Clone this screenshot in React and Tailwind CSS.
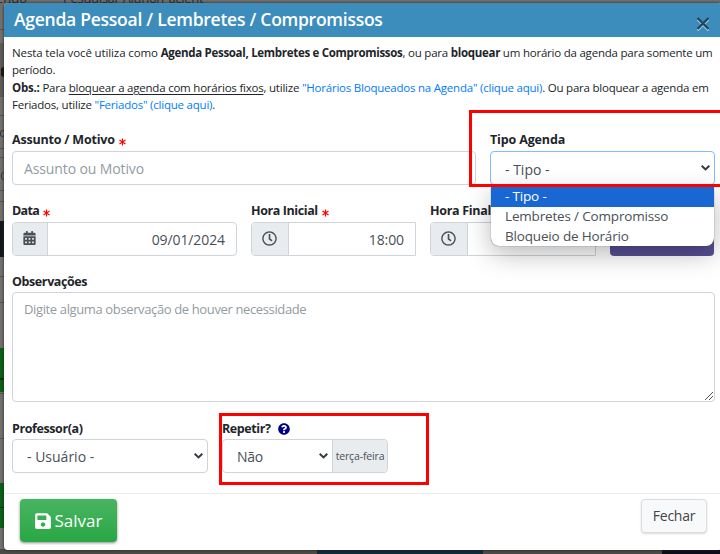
import React, { useState } from 'react';
import { FaCalendarAlt, FaRegClock, FaSave, FaQuestionCircle } from 'react-icons/fa';

const Label = ({ children, required, spacing = 'tracking-[-0.4px]' }) => (
  <label className="flex items-center h-[21px] pt-[2px] text-[12.5px] font-bold text-[#212529] whitespace-nowrap">
    <span className={spacing}>{children}</span>
    {required && <Asterisk />}
  </label>
);

const Asterisk = () => (
  <svg className="w-[7px] h-[8px] ml-1 mt-[2px]" viewBox="0 0 7 8" stroke="#ff0000" strokeWidth="1.2">
    <path d="M3.5 0.5v7M0.5 2l6 4M6.5 2l-6 4" />
  </svg>
);

const Chevron = () => (
  <svg className="w-[9px] h-[6px] shrink-0" viewBox="0 0 9 6" fill="none" stroke="#343a40" strokeWidth="2">
    <path d="M0.7 0.8L4.5 4.4L8.3 0.8" />
  </svg>
);

const TimeInput = ({ value }) => (
  <div className="flex h-[34px] border border-[#ced4da] rounded-l">
    <div className="w-[37px] pr-[2px] shrink-0 flex items-center justify-center bg-[#e9ecef] border-r border-[#ced4da] rounded-l-[3px]">
      <FaRegClock className="w-[15px] h-[15px] text-[#495057] -mt-[2px]" />
    </div>
    <div className="flex-1 flex items-center justify-end pr-[11px] pt-[2px] text-sm text-[#495057] tracking-[-0.1px]">{value}</div>
  </div>
);

const options = ['- Tipo -', 'Lembretes / Compromisso', 'Bloqueio de Horário'];

// Page behind the modal, dimmed by the backdrop
const Backdrop = () => (
  <div className="absolute inset-0 overflow-hidden bg-[#72706d] text-[13px] text-[#2b2b2b]">
    <div className="flex -mt-[11px] leading-[18px] whitespace-nowrap">
      <span className="w-[63px] -ml-1">endo</span>
      <span className="tracking-[-0.3px] ml-1">Pesquisar Aluno/Pacient</span>
    </div>
    <div className="absolute left-0 top-[29px] w-1 h-px bg-[#575552]" />
    <div className="absolute left-0 top-[43px] w-1 h-[54px] bg-[#5d5b58]" />
    <div className="absolute left-[1px] top-[67px] w-[3px] h-[10px] rounded-l-full bg-[#1c1310]" />
    <div className="absolute left-0 top-[115px] w-1 h-px bg-[#575552]" />
    <div className="absolute left-0 top-[130px] w-[5px] h-[7px] rounded-full border border-[#333]" />
    <div className="absolute left-0 top-[148px] w-1 h-[10px] border-y border-[#575552]" />
    <div className="absolute left-[1px] top-[172px] w-[5px] h-[8px] rounded-full border border-[#333]" />
    <div className="absolute left-0 top-[190px] w-1 h-[12px] border-y border-[#575552]" />
    <div className="absolute left-0 top-[221px] w-1 h-9 bg-[#11181d]" />
    <div className="absolute left-0 top-[276px] w-1 h-[27px] border-y border-[#575552]" />
    <div className="absolute left-0 top-[348px] w-1 h-11 bg-[#086214]" />
    <div className="absolute left-0 top-[378px] w-1 h-[2px] bg-[#0a2a0e]" />
    <div className="absolute left-0 top-[393px] w-1 h-[46px] border-y border-[#575552]" />
    <div className="absolute left-0 top-[483px] w-1 h-[45px] bg-[#086214]" />
    <div className="absolute left-0 top-[507px] w-1 h-px bg-[#0a2a0e]" />
    <div className="absolute left-0 bottom-0 w-full h-[5px] flex bg-[#4b4b44]">
      <div className="ml-[317px] w-[166px] bg-[#102c3c]" />
      <div className="w-[179px] bg-[#4c4948]" />
      <div className="flex-1 bg-[#0b0e19]" />
    </div>
  </div>
);

const App = () => {
  const [selected, setSelected] = useState(0);

  return (
    <div className="relative w-[720px] h-[554px] overflow-hidden font-['Open_Sans','Noto_Sans',sans-serif]">
      <Backdrop />

      <div className="relative ml-1 mt-[3px] w-[718px] h-[547px] bg-white rounded overflow-hidden shadow-[0_0_3px_#222]">
        <header className="h-[34px] bg-[#3c8dbc] flex items-center justify-between pl-[10px] pr-[12px]">
          <h1 className="text-[17.5px] leading-none font-semibold text-white tracking-[-0.26px] whitespace-nowrap">
            Agenda Pessoal / Lembretes / Compromissos
          </h1>
          <svg className="w-[14px] h-[14px] mt-[8px]" viewBox="0 0 14 14" fill="none">
            <path d="M1.5 2.5l11 11M12.5 2.5l-11 11" stroke="#a9cde2" strokeWidth="2" />
            <path d="M1.5 1l11 11M12.5 1l-11 11" stroke="#1e465e" strokeWidth="2.3" />
          </svg>
        </header>

        <section className="pl-2 pt-[7px] h-[92px] text-[11.5px] leading-[17.4px] text-[#212529] tracking-[-0.22px] whitespace-nowrap">
          <p>
            <span className="tracking-[-0.12px]">Nesta tela você utiliza como </span>
            <b className="tracking-[-0.3px]">Agenda Pessoal, Lembretes e Compromissos</b>, ou para{' '}
            <b className="tracking-[-0.3px]">bloquear</b> um horário da agenda para somente um
          </p>
          <p>período.</p>
          <p>
            <b>Obs.:</b> Para <u className="underline-offset-2">bloquear a agenda com horários fixos</u>, utilize{' '}
            <span className="text-[#007bff]">"Horários Bloqueados na Agenda" (clique aqui)</span>. Ou para bloquear a agenda em
          </p>
          <p>
            Feriados, utilize <span className="text-[#007bff]">"Feriados" (clique aqui)</span>.
          </p>
        </section>

        <div className="flex pl-2 gap-[14px] h-[71px]">
          <div className="w-[464px]">
            <Label required spacing="tracking-[-0.2px]">Assunto / Motivo</Label>
            <div className="mt-[1px] h-[34px] border border-[#ced4da] rounded flex items-center px-[11px] pt-[2px] text-sm text-[#939ba2] tracking-[-0.12px]">
              Assunto ou Motivo
            </div>
          </div>
          <div className="w-[225px]">
            <Label spacing="tracking-[-0.15px]">Tipo Agenda</Label>
            <div className="mt-[1px] h-[34px] border border-[#80bdff] rounded flex items-center justify-between pl-[14px] pr-[4px] text-sm text-[#495057]">
              <span className="pt-[3px]">{options[selected]}</span>
              <Chevron />
            </div>
          </div>
        </div>

        <div className="flex pl-2 h-[71px]">
          <div className="w-[225px] mr-[14px]">
            <Label required spacing="tracking-[-0.7px]">Data</Label>
            <div className="mt-[1px] h-[34px] flex border border-[#ced4da] rounded">
              <div className="w-[35px] pr-[2px] flex items-center justify-center bg-[#e9ecef] border-r border-[#ced4da] rounded-l-[3px]">
                <FaCalendarAlt className="w-[13px] h-[14px] text-[#495057] -mt-[2px]" />
              </div>
              <div className="flex-1 flex items-center justify-end pr-[11px] pt-[2px] text-sm text-[#495057] tracking-[-0.1px]">09/01/2024</div>
            </div>
          </div>
          <div className="w-[165px] mr-[14px]">
            <Label required>Hora Inicial</Label>
            <div className="mt-[1px]"><TimeInput value="18:00" /></div>
          </div>
          <div className="w-[166px] mr-[14px]">
            <Label required spacing="tracking-[-0.3px]">Hora Final</Label>
            <div className="mt-[1px]"><TimeInput value="" /></div>
          </div>
          <div className="mt-[22px] w-[104px] h-[34px] rounded bg-[#564f93]" />
        </div>

        <div className="px-2 h-[147px]">
          <Label>Observações</Label>
          <div className="w-[703px] h-[110px] border border-[#ced4da] rounded px-[11px] pt-[7px] text-[13px] text-[#939ba2] flex justify-between">
            <span className="tracking-[-0.37px]">Digite alguma observação de houver necessidade</span>
            <svg className="w-2 h-2 self-end -mr-[10px] mb-[1px]" viewBox="0 0 8 8" stroke="#444" strokeWidth="0.9">
              <path d="M0 8L8 0M4 8L8 4" />
            </svg>
          </div>
        </div>

        <div className="flex pl-2 gap-[14px] h-[75px]">
          <div className="w-[196px]">
            <Label>Professor(a)</Label>
            <div className="h-[34px] border border-[#ced4da] rounded flex items-center justify-between pl-[14px] pr-[4px] text-sm text-[#495057]">
              <span className="pt-[2px]">- Usuário -</span>
              <Chevron />
            </div>
          </div>
          <div className="w-[166px]">
            <div className="flex items-center gap-[7px]">
              <Label>Repetir?</Label>
              <FaQuestionCircle className="w-3 h-3 text-[#00008b]" />
            </div>
            <div className="h-[34px] border border-[#ced4da] rounded flex">
              <div className="w-[109px] flex items-center justify-between pl-[14px] pr-[4px] text-sm text-[#495057] tracking-[-0.3px]">
                <span className="pt-[2px]">Não</span>
                <Chevron />
              </div>
              <div className="flex-1 flex items-center justify-center pt-px bg-[#e9ecef] border-l border-[#ced4da] text-[10.5px] text-[#495057] tracking-[-0.15px] rounded-r-[3px]">
                terça-feira
              </div>
            </div>
          </div>
        </div>

        <footer className="flex justify-between items-start border-t border-[#e9ecef] pl-4 pr-[15px] pt-[5px]">
          <button className="w-[97px] h-[43px] rounded bg-linear-to-b from-[#48b461] to-[#28a745] text-white text-[17px] flex items-center justify-center gap-1 shadow-[0_1px_3px_rgba(0,0,0,0.45)]">
            <FaSave className="w-4 h-[18px]" />
            <span>Salvar</span>
          </button>
          <button className="w-[66px] h-[34px] rounded border border-[#ddd] bg-[#f8f9fa] text-sm text-[#444] tracking-[-0.25px] shadow-[0_1px_2px_rgba(0,0,0,0.15)]">
            Fechar
          </button>
        </footer>
      </div>

      {/* Opened "Tipo Agenda" list */}
      <ul className="absolute left-[491px] top-[187px] w-[223px] h-[59px] bg-white rounded-b-lg overflow-hidden text-[13.5px] tracking-[-0.17px] text-[#495057] shadow-[0_0_1px_#333,0_8px_26px_rgba(0,0,0,0.28)]">
        {options.map((option, index) => (
          <li
            key={option}
            onClick={() => setSelected(index)}
            className={`h-5 pl-[14px] leading-[19px] ${index === selected ? 'bg-[#1967d2] text-white' : ''}`}
          >
            {option}
          </li>
        ))}
      </ul>

      {/* Highlight boxes */}
      <div className="absolute left-[469px] top-[110px] w-[260px] h-[77px] border-[3px] border-[#ff0000]" />
      <div className="absolute left-[219px] top-[413px] w-[210px] h-[72px] border-[3px] border-[#ff0000]" />
    </div>
  );
};

export default App;
